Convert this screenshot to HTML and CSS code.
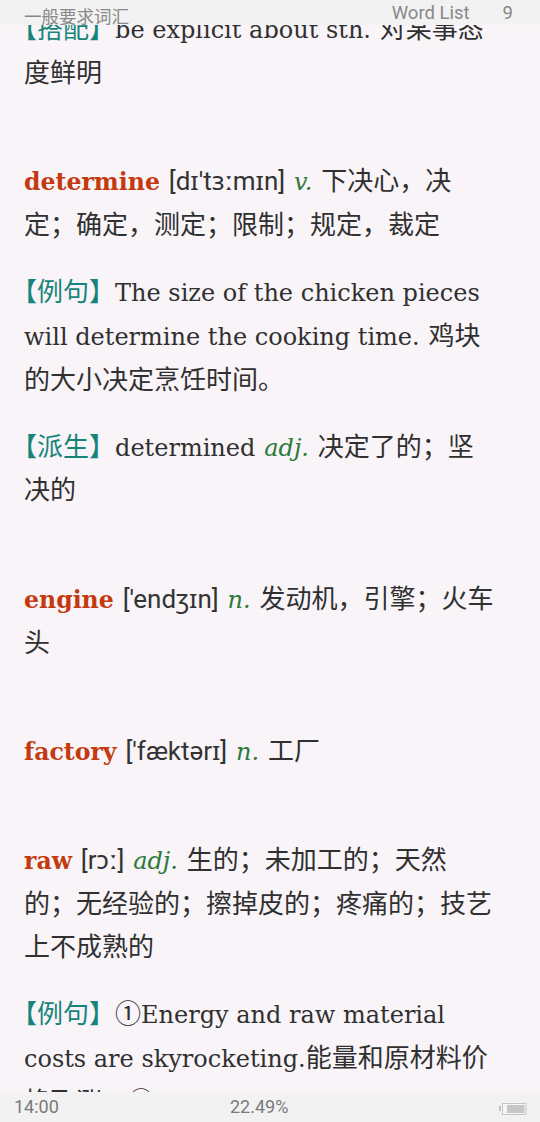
FILE: index.html
```html
<!DOCTYPE html>
<html lang="zh-CN">
<head>
<meta charset="utf-8">
<title>Word List 9</title>
<link rel="stylesheet" href="styles.css">
</head>
<body>
<main class="content">
  <section class="entry">
    <p><span class="tag"><span class="ob">【</span>搭配】</span><span class="en">be explicit about sth.</span> 对某事态度鲜明</p>
  </section>
  <section class="entry">
    <p><span class="en hw">determine</span> <span class="ph">[dɪ'tɜːmɪn]</span> <span class="en pos">v.</span> 下决心，决定；确定，测定；限制；规定，裁定</p>
    <p><span class="tag"><span class="ob">【</span>例句】</span><span class="en">The size of the chicken pieces will determine the cooking time.</span> 鸡块的大小决定烹饪时间。</p>
    <p><span class="tag"><span class="ob">【</span>派生】</span><span class="en">determined</span> <span class="en pos">adj.</span> 决定了的；坚决的</p>
  </section>
  <section class="entry">
    <p><span class="en hw">engine</span> <span class="ph">['endʒɪn]</span> <span class="en pos">n.</span> 发动机，引擎；火车头</p>
  </section>
  <section class="entry">
    <p><span class="en hw">factory</span> <span class="ph">['fæktərɪ]</span> <span class="en pos">n.</span> 工厂</p>
  </section>
  <section class="entry">
    <p><span class="en hw">raw</span> <span class="ph">[rɔː]</span> <span class="en pos">adj.</span> 生的；未加工的；天然的；无经验的；擦掉皮的；疼痛的；技艺上不成熟的</p>
    <p><span class="tag"><span class="ob">【</span>例句】</span>①<span class="en">Energy and raw material costs are skyrocketing.</span>能量和原材料价格飞涨。②<span class="en">The cost and price of oil will rise.</span>石油的成本和价格将会上涨。</p>
  </section>
</main>

<header class="topbar">
  <span class="book">一般要求词汇</span>
  <span class="chap"><span>Word List</span><span>9</span></span>
</header>

<footer class="bottombar">
  <span class="time">14:00</span>
  <span class="progress">22.49%</span>
  <svg class="battery" width="28" height="12" viewBox="0 0 28 12" aria-hidden="true">
    <rect x="0" y="3" width="2" height="5" fill="#c2c2c2"/>
    <rect x="3.5" y="0.5" width="23.5" height="11" fill="#f6f6f6" stroke="#c6c6c6"/>
    <rect x="8" y="2" width="17.5" height="8" fill="#c6c6c6"/>
  </svg>
</footer>
</body>
</html>
```

FILE: styles.css
```css
html, body {
  margin: 0;
  padding: 0;
}

body {
  position: relative;
  width: 540px;
  height: 1122px;
  overflow: hidden;
  background: #f8f4f8;
  color: #303030;
  font-family: "Noto Sans CJK SC", sans-serif;
}

.content {
  padding: 5px 46px 0 24px;
}

.entry p {
  margin: 0;
  font-size: 26px;
  line-height: 43.7px;
  word-spacing: 3px;
}

.entry p + p {
  margin-top: 23.3px;
}

.entry + .entry {
  margin-top: 65px;
}

.en {
  font-family: "DejaVu Serif", serif;
  font-size: 24px;
  line-height: 1;
  word-spacing: 0;
}

.hw {
  font-weight: bold;
  font-size: 23.6px;
  color: #c43a10;
}

.ph {
  font-family: Roboto, "Noto Sans", "DejaVu Sans", sans-serif;
  font-size: 26px;
  line-height: 1;
  word-spacing: 0;
  color: #333333;
}

.pos {
  font-style: italic;
  color: #2b7a3b;
}

.tag {
  color: #17847a;
  line-height: 1;
}

.ob {
  font-feature-settings: "halt";
}

.topbar {
  position: absolute;
  top: 0;
  left: 0;
  right: 0;
  height: 25px;
  background: #f2f2f2;
  display: flex;
  justify-content: space-between;
  align-items: flex-start;
  padding: 0 27px 0 24px;
  color: #888888;
  line-height: 1;
}

.book {
  font-family: "Noto Sans CJK SC", sans-serif;
  font-size: 17.5px;
  margin-top: 6.5px;
}

.chap {
  display: flex;
  gap: 33px;
  font-family: Roboto, sans-serif;
  font-size: 18.5px;
  margin-top: 3.7px;
}

.bottombar {
  position: absolute;
  bottom: 0;
  left: 0;
  right: 0;
  height: 30px;
  background: #f2f2f2;
  display: grid;
  grid-template-columns: 216px auto 1fr;
  align-items: center;
  padding: 0 13px 0 14px;
  font-family: Roboto, sans-serif;
  font-size: 18px;
  line-height: 1;
  color: #7a7a7a;
}

.battery {
  justify-self: end;
  margin-top: 4px;
}
```
